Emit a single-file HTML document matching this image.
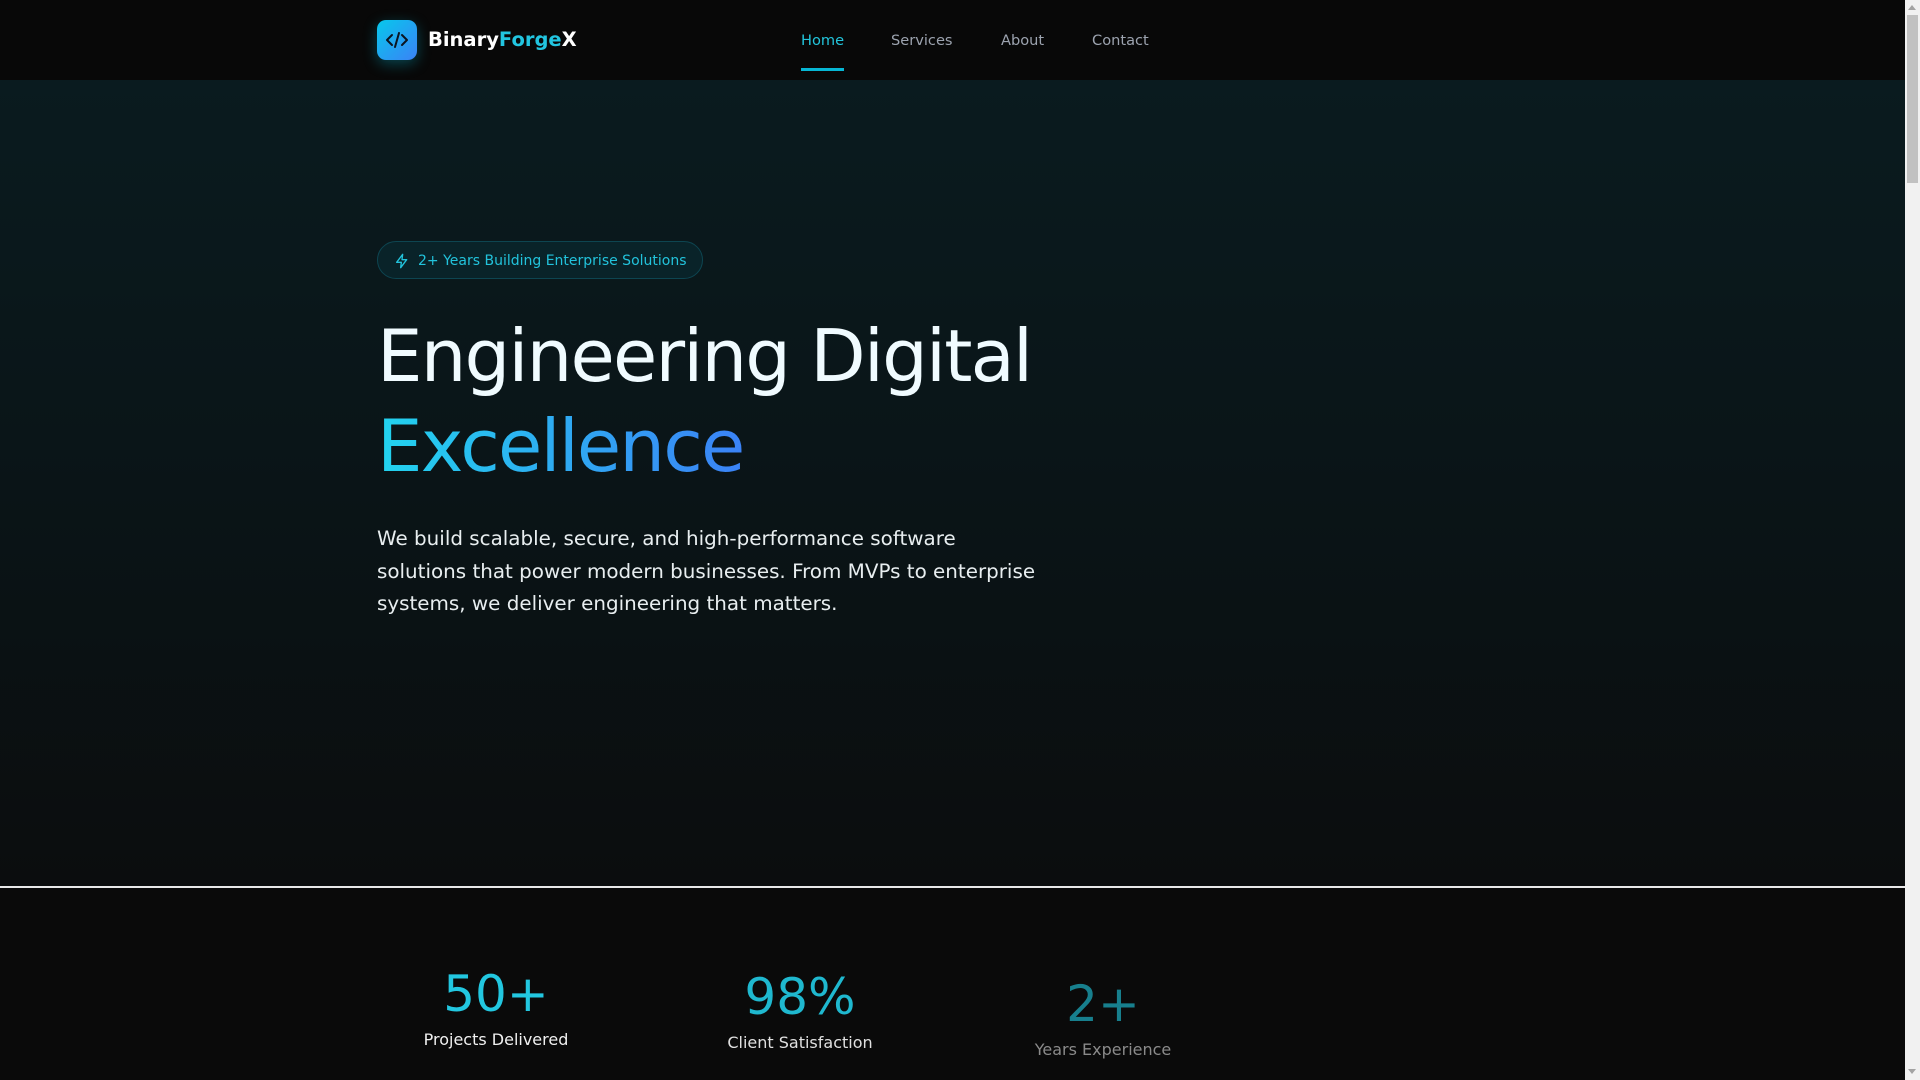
<!DOCTYPE html>
<html><head><meta charset="utf-8"><style>
*{margin:0;padding:0;box-sizing:border-box}
html,body{width:1920px;height:1080px;overflow:hidden;background:#0a0a0a;font-family:"DejaVu Sans","Liberation Sans",sans-serif}
#page{position:absolute;left:0;top:0;width:1905px;height:1080px;overflow:hidden}
header{position:absolute;left:0;top:0;width:1905px;height:80px;background:#080808}
.logo{position:absolute;left:377px;top:20px;width:40px;height:40px;border-radius:9px;background:linear-gradient(135deg,#06c8ec,#3b82f6);box-shadow:0 4px 14px rgba(6,182,212,.35)}
.brand{position:absolute;left:428px;top:27px;font-size:19.5px;font-weight:bold;color:#fff;line-height:26px}
.brand span{color:#22c5e0}
nav a{position:absolute;top:32px;font-size:14.6px;color:#9ca3af;text-decoration:none;line-height:18px}
.ul{position:absolute;left:801px;top:68px;width:43px;height:3px;background:#06b6d4}
.hero{position:absolute;left:0;top:80px;width:1905px;height:806px;background:linear-gradient(180deg,#0a1b1f 0%,#0a1518 45%,#0b0d0e 100%)}
.badge{position:absolute;left:377px;top:241px;width:326px;height:38px;border-radius:19px;background:#092329;border:1px solid #0d4551;color:#22c3dc;font-size:14px;line-height:38px;padding-left:40px}
.badge svg{position:absolute;left:16px;top:11px}
h1{position:absolute;left:377px;font-weight:normal;font-size:72px;letter-spacing:-1.8px;white-space:nowrap;line-height:90px}
.l1{top:311px;color:#f0fbff}
.l2{top:401px;background:linear-gradient(90deg,#22d3ee,#3b82f6);-webkit-background-clip:text;background-clip:text;color:transparent;display:inline-block}
p.lead{position:absolute;left:377px;top:523px;font-size:19.9px;line-height:32.5px;color:#e8eef0;white-space:nowrap}
.line{position:absolute;left:0;top:886px;width:1905px;height:2px;background:#e8e8e8}
.stat{position:absolute;width:300px;text-align:center}
.num{font-size:50px;line-height:60px}
.lab{font-size:16px;margin-top:6px}
.sb{position:absolute;left:1905px;top:0;width:15px;height:1080px;background:#f1f1f1}
.th{position:absolute;left:2px;top:15px;width:11px;height:168px;background:#c1c1c1}
</style></head><body>
<div id="page">
<div class="hero"></div>
<header>
<div class="logo"><svg width="40" height="40" viewBox="0 0 40 40" fill="none" stroke="#0b1420" stroke-width="2" stroke-linecap="round" stroke-linejoin="round"><path d="M15 15l-5 5 5 5M25 15l5 5-5 5M22 13l-4 14"/></svg></div>
<div class="brand">Binary<span>Forge</span>X</div>
<nav><a style="left:801px;color:#22c5dc">Home</a><a style="left:891px">Services</a><a style="left:1001px">About</a><a style="left:1092px">Contact</a></nav>
<div class="ul"></div>
</header>
<div class="badge"><svg width="16" height="16" viewBox="0 0 24 24" fill="none" stroke="#22c3dc" stroke-width="2" stroke-linejoin="round"><path d="M13 2L4 14h7l-1 8 9-12h-7z"/></svg>2+ Years Building Enterprise Solutions</div>
<h1 class="l1">Engineering Digital</h1>
<h1 class="l2">Excellence</h1>
<p class="lead">We build scalable, secure, and high-performance software<br>solutions that power modern businesses. From MVPs to enterprise<br>systems, we deliver engineering that matters.</p>
<div class="line"></div>
<div class="stat" style="left:346px;top:964px"><div class="num" style="color:#22c7e0">50+</div><div class="lab" style="color:#f0f0f0">Projects Delivered</div></div>
<div class="stat" style="left:650px;top:967px"><div class="num" style="color:#1fb8cf">98%</div><div class="lab" style="color:#e0e0e0">Client Satisfaction</div></div>
<div class="stat" style="left:953px;top:974px"><div class="num" style="color:#177f8d">2+</div><div class="lab" style="color:#8a8a8a">Years Experience</div></div>
</div>
<div class="sb"><div style="position:absolute;left:3px;top:5px;width:0;height:0;border-left:4.5px solid transparent;border-right:4.5px solid transparent;border-bottom:5px solid #a3a3a3"></div><div class="th"></div><div style="position:absolute;left:3px;top:1069px;width:0;height:0;border-left:4.5px solid transparent;border-right:4.5px solid transparent;border-top:5px solid #a3a3a3"></div></div>
</body></html>
